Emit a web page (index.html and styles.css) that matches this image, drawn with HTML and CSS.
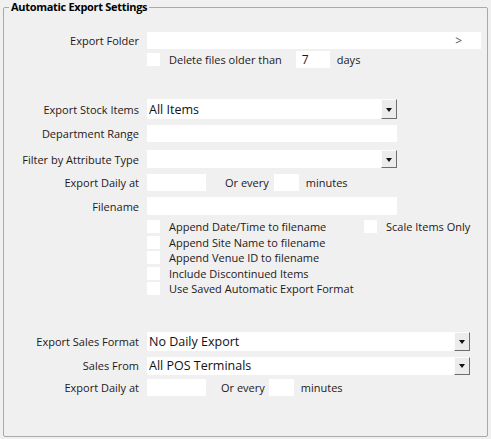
FILE: index.html
```html
<!DOCTYPE html>
<html lang="en">
<head>
    <meta charset="UTF-8">
    <title>Automatic Export Settings</title>
    <link rel="stylesheet" href="styles.css">
</head>
<body>
    <div class="group">
        <span class="group-title">Automatic Export Settings</span>

        <div class="row r-folder">
            <label class="lbl">Export Folder</label>
            <div class="box w-folder"><span class="more">&gt;</span></div>
        </div>
        <div class="row r-delete">
            <span class="chk"></span>
            <span class="txt del">Delete files older than</span>
            <div class="box w-days">7</div>
            <span class="txt">days</span>
        </div>

        <div class="row r-stock">
            <label class="lbl">Export Stock Items</label>
            <div class="combo w-combo"><span class="val">All Items</span><span class="drop"></span></div>
        </div>
        <div class="row r-dept">
            <label class="lbl">Department Range</label>
            <div class="box w-combo"></div>
        </div>
        <div class="row r-filter">
            <label class="lbl">Filter by Attribute Type</label>
            <div class="combo w-combo"><span class="val"></span><span class="drop"></span></div>
        </div>
        <div class="row r-daily">
            <label class="lbl">Export Daily at</label>
            <div class="box w-time"></div>
            <span class="txt every">Or every</span>
            <div class="box w-mins"></div>
            <span class="txt">minutes</span>
        </div>
        <div class="row r-file">
            <label class="lbl">Filename</label>
            <div class="box w-combo"></div>
        </div>

        <div class="checks">
            <div class="crow">
                <span class="chk"></span><span class="txt ctext first">Append Date/Time to filename</span>
                <span class="chk"></span><span class="txt">Scale Items Only</span>
            </div>
            <div class="crow"><span class="chk"></span><span class="txt ctext">Append Site Name to filename</span></div>
            <div class="crow"><span class="chk"></span><span class="txt ctext">Append Venue ID to filename</span></div>
            <div class="crow"><span class="chk"></span><span class="txt ctext">Include Discontinued Items</span></div>
            <div class="crow"><span class="chk"></span><span class="txt ctext">Use Saved Automatic Export Format</span></div>
        </div>

        <div class="row r-sales">
            <label class="lbl">Export Sales Format</label>
            <div class="combo w-wide"><span class="val">No Daily Export</span><span class="drop"></span></div>
        </div>
        <div class="row r-from">
            <label class="lbl">Sales From</label>
            <div class="combo w-wide"><span class="val">All POS Terminals</span><span class="drop"></span></div>
        </div>
        <div class="row r-daily2">
            <label class="lbl">Export Daily at</label>
            <div class="box w-time"></div>
            <span class="txt every2">Or every</span>
            <div class="box w-mins"></div>
            <span class="txt">minutes</span>
        </div>
    </div>
</body>
</html>
```
FILE: styles.css
```css
body { margin: 0; background: #f0f0f0; font-family: "Open Sans", "Noto Sans", sans-serif; font-size: 11px; color: #1f1818; }
.group { position: relative; margin: 7px 0 0 3px; width: 483px; height: 428px; border: 1px solid #a9a9a9; border-radius: 2px; }
.group-title { position: absolute; left: 5px; top: -9px; padding: 0 2px; background: #f0f0f0; font-weight: bold; font-size: 11px; letter-spacing: -0.3px; color: #000; line-height: 16px; }

.row { display: flex; align-items: center; }
.lbl { width: 135px; margin-right: 8px; text-align: right; white-space: nowrap; }
.txt { white-space: nowrap; }
.box { background: #fff; height: 100%; display: flex; align-items: center; box-sizing: border-box; }
.combo { display: flex; height: 100%; background: #fff; }
.val { flex: 1; font-size: 12.5px; padding-left: 2px; display: flex; align-items: center; color: #111; }
.drop { width: 16px; box-sizing: border-box; background: #ececec; border: 1px solid; border-color: #fcfcfc #6e6e6e #6e6e6e #fcfcfc; display: flex; align-items: center; justify-content: center; }
.drop::after { content: ""; border-left: 3px solid transparent; border-right: 3px solid transparent; border-top: 4px solid #111; margin-top: 1px; }

.chk { width: 13px; height: 13px; background: #fff; flex: none; }

.r-folder { height: 17px; margin-top: 24px; }
.w-folder { width: 334px; justify-content: flex-end; padding-right: 19px; }
.more { color: #555; font-size: 12px; }
.r-delete { height: 17px; margin-top: 2px; padding-left: 143px; }
.del { margin-left: 9px; }
.w-days { width: 34px; margin-left: 14px; padding-left: 6px; font-size: 12px; }
.w-days + .txt { margin-left: 7px; }

.r-stock { height: 20px; margin-top: 31px; }
.w-combo { width: 250px; }
.r-dept { height: 17px; margin-top: 6px; }
.r-filter { height: 18px; margin-top: 8px; }
.r-daily { height: 17px; margin-top: 6px; }
.w-time { width: 59px; }
.w-mins { width: 25px; }
.every { margin: 0 5px 0 19px; }
.every2 { margin: 0 4px 0 15px; }
.w-mins + .txt { margin-left: 7px; }
.r-file { height: 18px; margin-top: 6px; }

.checks { margin-top: 4px; padding-left: 143px; }
.crow { display: flex; align-items: center; height: 15.5px; }
.ctext { margin-left: 9px; }
.ctext.first { width: 195px; }
.ctext.first + .chk + .txt { margin-left: 9px; }

.r-sales { height: 19px; margin-top: 35px; }
.w-wide { width: 323px; }
.r-from { height: 18px; margin-top: 6px; }
.r-daily2 { height: 17px; margin-top: 4px; }
```
